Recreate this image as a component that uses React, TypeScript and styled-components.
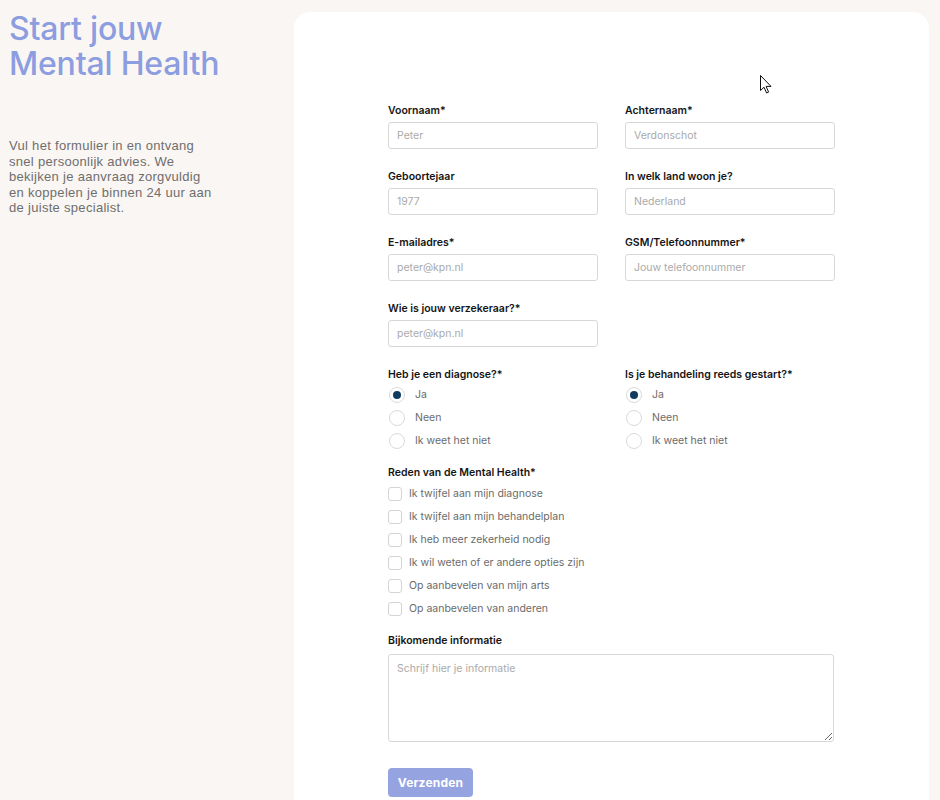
import * as React from 'react';
import styled, { createGlobalStyle } from 'styled-components';

const GlobalStyle = createGlobalStyle`
  html, body {
    margin: 0;
    background: #faf6f3;
  }
  * {
    box-sizing: border-box;
  }
`;

const Page = styled.div`
  display: flex;
  align-items: flex-start;
  padding: 12px 11px 0 9px;
  height: 800px;
  overflow: hidden;
`;

const Intro = styled.aside`
  width: 285px;
  flex-shrink: 0;
`;

const Heading = styled.h1`
  margin: -1px 0 0;
  font-family: 'Inter', sans-serif;
  font-weight: 500;
  font-size: 32px;
  line-height: 35px;
  letter-spacing: -0.2px;
  color: #8c9de0;
`;

const Lead = styled.p`
  margin: 57px 0 0;
  max-width: 207px;
  font-family: 'Liberation Sans', Arial, sans-serif;
  font-size: 13px;
  line-height: 15.5px;
  letter-spacing: 0.3px;
  color: #6e6e6e;
`;

const Card = styled.section`
  position: relative;
  flex: 1;
  min-height: 820px;
  background: #ffffff;
  border-radius: 16px;
  padding: 92px 0 40px;
`;

const Form = styled.form`
  width: 447px;
  margin: 0 0 0 94px;
  font-family: 'Inter', sans-serif;
`;

const Grid = styled.div<{ $rowGap?: number }>`
  display: grid;
  grid-template-columns: 210px 210px;
  column-gap: 27px;
  row-gap: ${p => p.$rowGap ?? 0}px;
`;

const Field = styled.div`
  display: flex;
  flex-direction: column;
`;

const Label = styled.label<{ $space?: number }>`
  display: block;
  font-size: 10.5px;
  font-weight: 600;
  line-height: 14px;
  color: #141414;
  margin-bottom: ${p => p.$space ?? 4}px;
`;

const Input = styled.input`
  width: 100%;
  height: 27px;
  padding: 0 8px;
  border: 1px solid #d8d8d8;
  border-radius: 3px;
  font-family: 'Inter', sans-serif;
  font-size: 10.5px;
  color: #333;
  outline: none;

  &::placeholder {
    color: #aaaaaa;
  }
`;

const Group = styled.div<{ $top: number }>`
  margin-top: ${p => p.$top}px;
`;

const Option = styled.label`
  display: flex;
  align-items: center;
  height: 23px;
  font-size: 10.5px;
  color: #6b6b6b;
`;

const RadioMark = styled.span<{ $checked?: boolean }>`
  width: 16px;
  height: 16px;
  margin: 0 10px 0 1px;
  border-radius: 50%;
  border: 1px solid #dadada;
  display: flex;
  align-items: center;
  justify-content: center;

  &::after {
    content: '';
    width: 8px;
    height: 8px;
    border-radius: 50%;
    background: ${p => (p.$checked ? '#103b60' : 'transparent')};
  }
`;

const BoxMark = styled.span`
  width: 14px;
  height: 14px;
  margin-right: 7px;
  border: 1px solid #d4d4d4;
  border-radius: 3px;
`;

const TextArea = styled.textarea`
  display: block;
  width: 446px;
  height: 88px;
  padding: 7px 8px;
  border: 1px solid #d8d8d8;
  border-radius: 3px;
  font-family: 'Inter', sans-serif;
  font-size: 10.5px;
  outline: none;
  resize: vertical;

  &::placeholder {
    color: #aaaaaa;
  }
`;

const Submit = styled.button`
  margin-top: 26px;
  width: 85px;
  height: 29px;
  border: none;
  border-radius: 4px;
  background: #95a4e1;
  color: #ffffff;
  font-family: 'Inter', sans-serif;
  font-weight: 700;
  font-size: 12px;
  letter-spacing: 0.2px;
`;

const Pointer = styled.svg`
  position: absolute;
  left: 466px;
  top: 63px;
`;

const fields = [
  { label: 'Voornaam*', placeholder: 'Peter' },
  { label: 'Achternaam*', placeholder: 'Verdonschot' },
  { label: 'Geboortejaar', placeholder: '1977' },
  { label: 'In welk land woon je?', placeholder: 'Nederland' },
  { label: 'E-mailadres*', placeholder: 'peter@kpn.nl' },
  { label: 'GSM/Telefoonnummer*', placeholder: 'Jouw telefoonnummer' },
  { label: 'Wie is jouw verzekeraar?*', placeholder: 'peter@kpn.nl' },
];

const radioGroups = ['Heb je een diagnose?*', 'Is je behandeling reeds gestart?*'];
const radioOptions = ['Ja', 'Neen', 'Ik weet het niet'];

const reasons = [
  'Ik twijfel aan mijn diagnose',
  'Ik twijfel aan mijn behandelplan',
  'Ik heb meer zekerheid nodig',
  'Ik wil weten of er andere opties zijn',
  'Op aanbevelen van mijn arts',
  'Op aanbevelen van anderen',
];

export default function App() {
  return (
    <>
      <GlobalStyle />
      <Page>
        <Intro>
          <Heading>
            Start jouw
            <br />
            Mental Health
          </Heading>
          <Lead>
            Vul het formulier in en ontvang snel persoonlijk advies. We bekijken je aanvraag
            zorgvuldig en koppelen je binnen 24 uur aan de juiste specialist.
          </Lead>
        </Intro>
        <Card>
          <Form onSubmit={e => e.preventDefault()}>
            <Grid $rowGap={21}>
              {fields.map(f => (
                <Field key={f.label}>
                  <Label>{f.label}</Label>
                  <Input placeholder={f.placeholder} />
                </Field>
              ))}
            </Grid>

            <Group $top={21}>
              <Grid>
                {radioGroups.map(g => (
                  <div key={g}>
                    <Label $space={1}>{g}</Label>
                    {radioOptions.map((o, i) => (
                      <Option key={o}>
                        <RadioMark $checked={i === 0} />
                        {o}
                      </Option>
                    ))}
                  </div>
                ))}
              </Grid>
            </Group>

            <Group $top={14}>
              <Label $space={2}>Reden van de Mental Health*</Label>
              {reasons.map(r => (
                <Option key={r}>
                  <BoxMark />
                  {r}
                </Option>
              ))}
            </Group>

            <Group $top={14}>
              <Label $space={6}>Bijkomende informatie</Label>
              <TextArea placeholder="Schrijf hier je informatie" />
            </Group>

            <Submit type="submit">Verzenden</Submit>
          </Form>
          <Pointer width="12" height="19" viewBox="0 0 12 19">
            <path
              d="M0.5 0.5 L0.5 15.5 L4 12.2 L6.6 18 L8.6 17.1 L6.1 11.4 L11 11.4 Z"
              fill="#ffffff"
              stroke="#111111"
              strokeWidth="1"
              strokeLinejoin="round"
            />
          </Pointer>
        </Card>
      </Page>
    </>
  );
}
